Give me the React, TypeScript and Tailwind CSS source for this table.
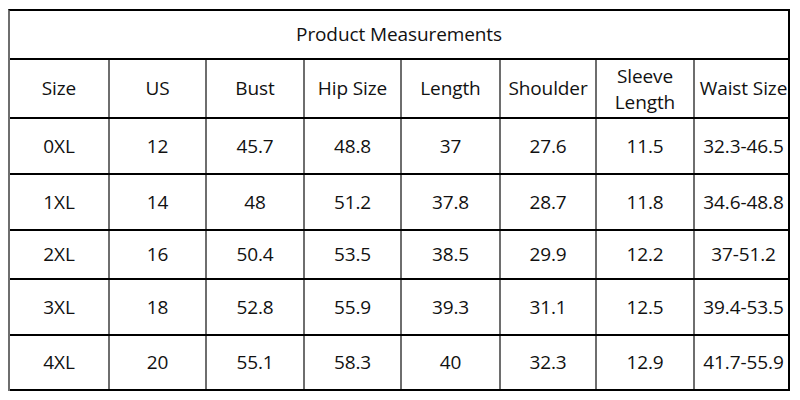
import React from "react";

const cols = "grid grid-cols-[98px_97px_98px_97px_99px_96px_98px_99px]";

const headers: React.ReactNode[] = [
  "Size",
  "US",
  "Bust",
  "Hip Size",
  "Length",
  "Shoulder",
  <span className="leading-[26px]">Sleeve<br />Length</span>,
  "Waist Size",
];

const rows: { h: string; cells: string[] }[] = [
  { h: "h-[56px]", cells: ["0XL", "12", "45.7", "48.8", "37", "27.6", "11.5", "32.3-46.5"] },
  { h: "h-[56px]", cells: ["1XL", "14", "48", "51.2", "37.8", "28.7", "11.8", "34.6-48.8"] },
  { h: "h-[49px]", cells: ["2XL", "16", "50.4", "53.5", "38.5", "29.9", "12.2", "37-51.2"] },
  { h: "h-[56px]", cells: ["3XL", "18", "52.8", "55.9", "39.3", "31.1", "12.5", "39.4-53.5"] },
  { h: "h-[55px]", cells: ["4XL", "20", "55.1", "58.3", "40", "32.3", "12.9", "41.7-55.9"] },
];

function Cell({ children, first }: { children: React.ReactNode; first?: boolean }) {
  return (
    <div
      className={
        "flex items-center justify-center text-center whitespace-nowrap " +
        (first ? "" : "border-l-2 border-[#6e6e6e]")
      }
    >
      {children}
    </div>
  );
}

export default function App() {
  return (
    <div className="w-[800px] h-[400px] bg-white pl-[8px] pt-[9px]">
      <div
        className="w-[782px] border-t-2 border-r-2 border-t-black border-r-black border-l-2 border-l-[#6e6e6e] text-[19px] tracking-[-0.1px] text-[#111111]"
        style={{ fontFamily: '"Open Sans", sans-serif' }}
      >
        <div className="h-[49px] flex items-center justify-center border-b-2 border-black">
          Product Measurements
        </div>
        <div className={cols + " h-[59px] border-b-2 border-black"}>
          {headers.map((c, i) => (
            <Cell key={i} first={i === 0}>
              {c}
            </Cell>
          ))}
        </div>
        {rows.map((r, ri) => (
          <div key={ri} className={cols + " " + r.h + " border-b-2 border-black"}>
            {r.cells.map((c, i) => (
              <Cell key={i} first={i === 0}>
                {c}
              </Cell>
            ))}
          </div>
        ))}
      </div>
    </div>
  );
}
